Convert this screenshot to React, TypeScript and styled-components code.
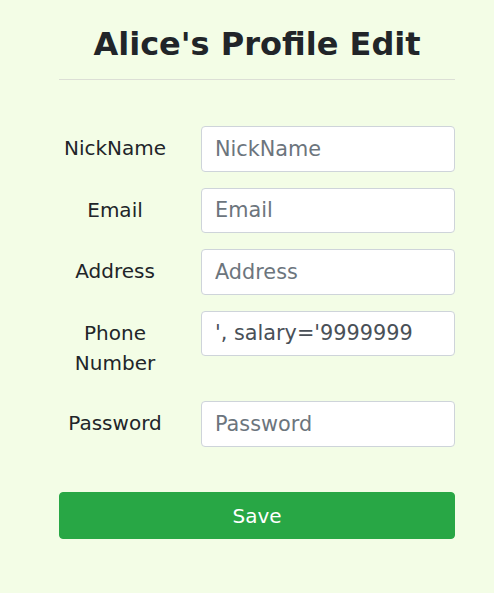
import styled, { createGlobalStyle } from "styled-components";

const GlobalStyle = createGlobalStyle`
  html, body {
    margin: 0;
    padding: 0;
    background-color: #f3fde6;
  }

  body {
    font-family: "DejaVu Sans", "Liberation Sans", sans-serif;
    color: #212529;
  }

  * {
    box-sizing: border-box;
  }
`;

const Page = styled.div`
  min-height: 593px;
  background-color: #f3fde6;
`;

const Container = styled.div`
  width: 396px;
  margin-left: 59px;
  padding-top: 24.7px;
`;

const Title = styled.h2`
  margin: 0 0 16px;
  font-size: 32px;
  line-height: 1.2;
  font-weight: 700;
  text-align: center;
  color: #212529;
`;

const Divider = styled.hr`
  margin: 0 0 46px;
  border: 0;
  border-top: 1px solid #dcdfd6;
`;

const Form = styled.form`
  display: flex;
  flex-direction: column;
  gap: 16px;
`;

const FieldRow = styled.div`
  display: grid;
  grid-template-columns: 112px 254px;
  column-gap: 30px;
  align-items: start;
`;

const Label = styled.label`
  padding: 7.25px 0;
  font-size: 20px;
  line-height: 30px;
  text-align: center;
  color: #212529;
`;

const Input = styled.input`
  display: block;
  width: 100%;
  height: 45.5px;
  padding: 0 13px;
  font-family: "DejaVu Sans", "Liberation Sans", sans-serif;
  font-size: 20.8px;
  color: #495057;
  background-color: #ffffff;
  border: 1px solid #ced4da;
  border-radius: 4px;
  outline: none;

  &::placeholder {
    color: #6c757d;
    opacity: 1;
  }
`;

const SaveButton = styled.button`
  display: block;
  width: 100%;
  height: 47px;
  margin-top: 45.5px;
  font-family: "DejaVu Sans", "Liberation Sans", sans-serif;
  font-size: 20px;
  color: #ffffff;
  background-color: #28a745;
  border: 1px solid #28a745;
  border-radius: 4px;
  cursor: pointer;
`;

const fields = [
  { id: "nickname", label: "NickName", type: "text", value: "" },
  { id: "email", label: "Email", type: "email", value: "" },
  { id: "address", label: "Address", type: "text", value: "" },
  { id: "phone", label: "Phone Number", type: "text", value: "', salary='9999999" },
  { id: "password", label: "Password", type: "password", value: "" },
];

export default function App() {
  return (
    <>
      <GlobalStyle />
      <Page>
        <Container>
          <Title>Alice's Profile Edit</Title>
          <Divider />
          <Form onSubmit={(e) => e.preventDefault()}>
            {fields.map((field) => (
              <FieldRow key={field.id}>
                <Label htmlFor={field.id}>{field.label}</Label>
                <Input
                  id={field.id}
                  type={field.type}
                  placeholder={field.id === "phone" ? "Phone Number" : field.label}
                  defaultValue={field.value}
                />
              </FieldRow>
            ))}
          </Form>
          <SaveButton type="submit">Save</SaveButton>
        </Container>
      </Page>
    </>
  );
}
